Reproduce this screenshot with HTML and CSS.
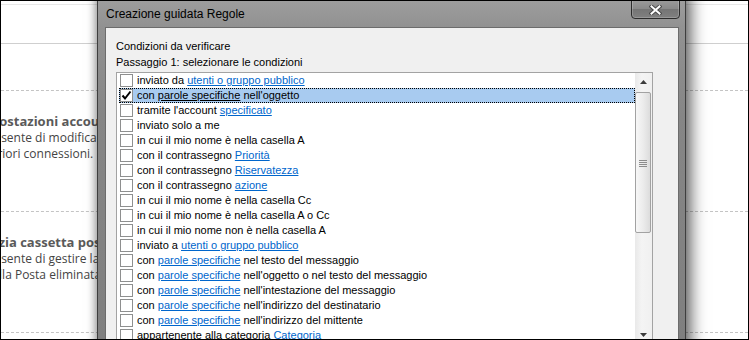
FILE: index.html
```html
<!DOCTYPE html>
<html lang="it">
<head>
    <meta charset="UTF-8">
    <meta name="viewport" content="width=device-width, initial-scale=1.0">
    <title>Creazione guidata Regole</title>
    <link rel="stylesheet" href="styles.css">
</head>
<body>
    <div class="screen">
        <!-- Outlook backstage behind the dialog -->
        <div class="backstage">
            <div class="top-strip"></div>
            <div class="intro"></div>
            <div class="option">
                <div class="option-body">
                    <div class="option-title">Impostazioni account</div>
                    <div class="option-text">Consente di modificare<br><span class="shift-a">ulteriori connessioni.</span></div>
                </div>
            </div>
            <div class="option">
                <div class="option-body">
                    <div class="option-title">Pulizia cassetta postale</div>
                    <div class="option-text">Consente di gestire la dimensione<br><span class="shift-b">della Posta eliminata</span></div>
                </div>
            </div>
        </div>

        <!-- Rules wizard window -->
        <div class="dialog">
            <div class="titlebar">
                <span class="title">Creazione guidata Regole</span>
                <div class="close-btn">
                    <svg width="13" height="10" viewBox="0 0 13 10">
                        <path d="M2.5 1.5 L10.5 8.5 M10.5 1.5 L2.5 8.5" stroke="#4a4a4a" stroke-width="4" stroke-linecap="square"/>
                        <path d="M2.5 1.5 L10.5 8.5 M10.5 1.5 L2.5 8.5" stroke="#fff" stroke-width="2" stroke-linecap="square"/>
                    </svg>
                </div>
            </div>
            <div class="client">
                <div class="label">Condizioni da verificare</div>
                <div class="label">Passaggio 1: selezionare le condizioni</div>
                <div class="listbox">
                    <ul class="rules">
                        <li class="rule"><span class="check"></span><span class="rule-text">inviato da <a href="#">utenti o gruppo pubblico</a></span></li>
                        <li class="rule selected"><span class="check">
                            <svg width="11" height="11" viewBox="0 0 11 11"><path d="M1.5 5.5 L4 8.5 L9.5 1.5" fill="none" stroke="#000" stroke-width="2"/></svg>
                        </span><span class="rule-text">con <a href="#">parole specifiche</a> nell'oggetto</span></li>
                        <li class="rule"><span class="check"></span><span class="rule-text">tramite l'account <a href="#">specificato</a></span></li>
                        <li class="rule"><span class="check"></span><span class="rule-text">inviato solo a me</span></li>
                        <li class="rule"><span class="check"></span><span class="rule-text">in cui il mio nome è nella casella A</span></li>
                        <li class="rule"><span class="check"></span><span class="rule-text">con il contrassegno <a href="#">Priorità</a></span></li>
                        <li class="rule"><span class="check"></span><span class="rule-text">con il contrassegno <a href="#">Riservatezza</a></span></li>
                        <li class="rule"><span class="check"></span><span class="rule-text">con il contrassegno <a href="#">azione</a></span></li>
                        <li class="rule"><span class="check"></span><span class="rule-text">in cui il mio nome è nella casella Cc</span></li>
                        <li class="rule"><span class="check"></span><span class="rule-text">in cui il mio nome è nella casella A o Cc</span></li>
                        <li class="rule"><span class="check"></span><span class="rule-text">in cui il mio nome non è nella casella A</span></li>
                        <li class="rule"><span class="check"></span><span class="rule-text">inviato a <a href="#">utenti o gruppo pubblico</a></span></li>
                        <li class="rule"><span class="check"></span><span class="rule-text">con <a href="#">parole specifiche</a> nel testo del messaggio</span></li>
                        <li class="rule"><span class="check"></span><span class="rule-text">con <a href="#">parole specifiche</a> nell'oggetto o nel testo del messaggio</span></li>
                        <li class="rule"><span class="check"></span><span class="rule-text">con <a href="#">parole specifiche</a> nell'intestazione del messaggio</span></li>
                        <li class="rule"><span class="check"></span><span class="rule-text">con <a href="#">parole specifiche</a> nell'indirizzo del destinatario</span></li>
                        <li class="rule"><span class="check"></span><span class="rule-text">con <a href="#">parole specifiche</a> nell'indirizzo del mittente</span></li>
                        <li class="rule"><span class="check"></span><span class="rule-text">appartenente alla categoria <a href="#">Categoria</a></span></li>
                    </ul>
                    <div class="scrollbar">
                        <div class="sb-btn">
                            <svg width="7" height="4" viewBox="0 0 7 4"><path d="M0 4 L3.5 0 L7 4 Z" fill="#3c3c3c"/></svg>
                        </div>
                        <div class="sb-track">
                            <div class="sb-thumb">
                                <svg width="8" height="8" viewBox="0 0 8 8">
                                    <path d="M0 1.5 H8 M0 3.5 H8 M0 5.5 H8 M0 7.5 H8" stroke="#8c8c8c" stroke-width="1"/>
                                </svg>
                            </div>
                        </div>
                        <div class="sb-btn">
                            <svg width="7" height="4" viewBox="0 0 7 4"><path d="M0 0 L7 0 L3.5 4 Z" fill="#3c3c3c"/></svg>
                        </div>
                    </div>
                </div>
            </div>
        </div>
    </div>
</body>
</html>
```

FILE: styles.css
```css
* {
    margin: 0;
    padding: 0;
    box-sizing: border-box;
}

body {
    width: 749px;
    height: 340px;
    overflow: hidden;
    background-color: #fff;
    font-family: "Liberation Sans", Arial, sans-serif;
    color: #000;
}

.screen {
    position: relative;
    width: 749px;
    height: 340px;
    border: 1px solid #000;
    overflow: hidden;
    background-color: #fff;
}

/* backstage */

.backstage {
    width: 100%;
    font-family: "Open Sans", "Noto Sans", sans-serif;
}

.top-strip {
    margin-top: 3px;
    height: 40px;
    border-top: 1px solid #e8e8e8;
    border-bottom: 1px solid #cfcfcf;
}

.intro {
    height: 47px;
    border-bottom: 1px dashed #c4c4c4;
}

.option {
    height: 121px;
    padding-top: 21px;
    border-bottom: 1px dashed #c4c4c4;
    overflow: hidden;
}

.option-body {
    margin-left: -27px;
    white-space: nowrap;
}

.option-title {
    font-size: 13px;
    font-weight: bold;
    line-height: 18px;
    color: #5a5a5a;
}

.option-text {
    margin-left: 5px;
    font-size: 12px;
    line-height: 16px;
    color: #444;
}

.shift-a {
    margin-left: -3px;
}

.shift-b {
    margin-left: 6px;
}

/* dialog window */

.dialog {
    position: absolute;
    left: 96px;
    top: -7px;
    width: 589px;
    height: 380px;
    border: 1px solid #3e3e3e;
    background: linear-gradient(to bottom, #a0a0a0, #929292 30px, #868686 120px, #7e7e7e);
    box-shadow: 6px 0 14px rgba(0,0,0,0.55), -2px 0 8px rgba(0,0,0,0.3);
}

.titlebar {
    display: flex;
    justify-content: space-between;
    align-items: flex-start;
    height: 32px;
    padding-left: 8px;
}

.title {
    padding-top: 11px;
    font-size: 12px;
    line-height: 16px;
    color: #000;
}

.close-btn {
    display: flex;
    align-items: center;
    justify-content: center;
    margin-top: 3px;
    margin-right: 5px;
    padding-top: 2px;
    width: 49px;
    height: 21px;
    border: 1px solid #2c2c2c;
    border-radius: 0 0 4px 4px;
    background: linear-gradient(to bottom, #9d9d9d, #8a8a8a 50%, #747474 51%, #808080);
    box-shadow: inset 0 0 0 1px rgba(255,255,255,0.2);
}

.client {
    margin: 0 6px 0 7px;
    height: 340px;
    border: 1px solid #6c6c6c;
    background-color: #f0f0f0;
    padding: 10px 0 0 10px;
}

.label {
    font-size: 11px;
    line-height: 16px;
}

/* listbox */

.listbox {
    display: flex;
    margin-top: 2px;
    width: 537px;
    border: 1px solid #a3a3a3;
    background-color: #fff;
}

.rules {
    list-style: none;
    flex: 1;
    padding-left: 2px;
}

.rule {
    display: flex;
    align-items: center;
    height: 15px;
    border: 1px solid transparent;
    font-size: 11px;
    line-height: 13px;
    white-space: nowrap;
}

.rule a {
    color: #0066cc;
    text-decoration: underline;
}

.rule.selected {
    background-color: #a8cbf0;
    border: 1px dotted #000;
}

.rule.selected a {
    color: #000;
}

.check {
    display: flex;
    align-items: center;
    justify-content: center;
    flex-shrink: 0;
    width: 13px;
    height: 13px;
    margin-right: 4px;
    border: 1px solid #8e8f8f;
    background-color: #fff;
}

/* scrollbar */

.scrollbar {
    display: flex;
    flex-direction: column;
    width: 17px;
    background: linear-gradient(to right, #e9e9e9, #f4f4f4 40%, #f0f0f0);
}

.sb-btn {
    display: flex;
    align-items: center;
    justify-content: center;
    height: 17px;
}

.sb-track {
    flex: 1;
    padding-top: 2px;
}

.sb-thumb {
    display: flex;
    align-items: center;
    justify-content: center;
    width: 16px;
    height: 141px;
    border: 1px solid #a2a2a2;
    border-radius: 2px;
    background: linear-gradient(to right, #f7f7f7, #ececec 50%, #dcdcdc);
}
```
